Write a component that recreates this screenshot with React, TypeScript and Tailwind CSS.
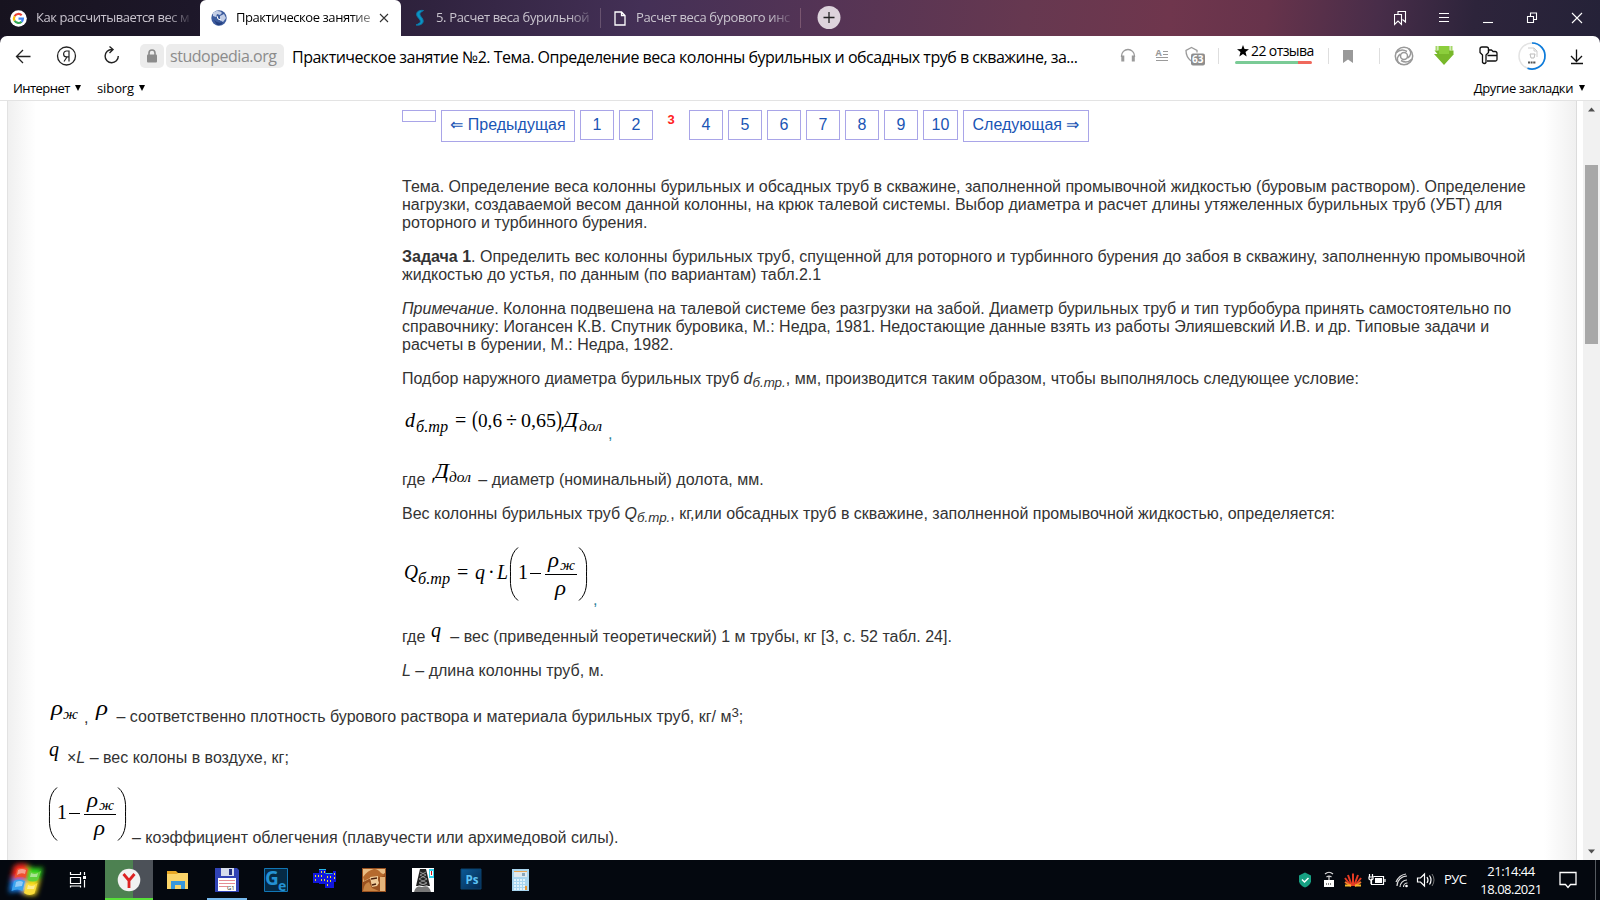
import React from "react";

type Kids = { children?: React.ReactNode; className?: string };

const Line = ({ children, className = "" }: Kids) => (
  <div className={"h-[18px] whitespace-nowrap leading-[18px] " + className}>{children}</div>
);

const T = ({ x, y, s = 20, i = true, w, children }: { x: number; y: number; s?: number; i?: boolean; w?: number; children: string }) => (
  <text
    x={x}
    y={y}
    fontSize={s}
    fontStyle={i ? "italic" : "normal"}
    textLength={w}
    lengthAdjust="spacingAndGlyphs"
    fill="#000"
  >
    {children}
  </text>
);

const Formula = ({ w, h, children }: { w: number; h: number; children: React.ReactNode }) => (
  <svg width={w} height={h} viewBox={`0 0 ${w} ${h}`} className="shrink-0 overflow-visible font-['Liberation_Serif',serif]">
    {children}
  </svg>
);

/* Bracketed (1 - rho_zh / rho) factor */
const Factor = ({ x, y = 0 }: { x: number; y?: number }) => (
  <g transform={`translate(${x} ${y})`}>
    <path d="M8 .5C-1 8 .5 20 .5 27S-1 46 8 53.500" fill="none" stroke="#000" />
    <path d="M69 .5C78 8 76.500 20 76.500 27S78 46 69 53.500" fill="none" stroke="#000" />
    <T x={8} y={32} i={false}>1</T>
    <path d="M20 26.500h11M35 27.500h32" stroke="#000" />
    <T x={38} y={20} w={11}>ρ</T>
    <T x={50} y={23} s={15} w={15}>ж</T>
    <T x={45} y={48} w={11}>ρ</T>
  </g>
);

const Page = ({ children, className = "h-[30px] w-[34px]" }: Kids) => (
  <div className={"flex justify-center border border-[#a9a5e8] pt-[5px] leading-[18px] text-[#1a55b5] " + className}>
    {children}
  </div>
);

const Sep = ({ className = "" }: Kids) => <div className={"h-4 w-px bg-[#dedede] " + className} />;

function Tabs() {
  return (
    <div className="flex h-9 items-center bg-[linear-gradient(97deg,#17131f_0%,#1d1729_12%,#30233f_27%,#443056_40%,#553455_52%,#663850_64%,#6f364d_73%,#67334b_79%,#482d49_86%,#2d243b_92%,#252238_100%)] text-[13px] text-[#c9c4ce]">
      <div className="flex h-9 w-[200px] items-center pl-[10px]">
        <svg width="17" height="17" viewBox="0 0 17 17" className="shrink-0">
          <circle cx="8.500" cy="8.500" r="8.300" fill="#fff" />
          <g fill="none" strokeWidth="2.200">
            <path d="M4.600 6.200A4.500 4.500 0 0 1 11.700 5.300" stroke="#ea4335" />
            <path d="M4.600 6.200a4.500 4.500 0 0 0 0 4.600" stroke="#fbbc05" />
            <path d="M4.600 10.800a4.500 4.500 0 0 0 7 .9" stroke="#34a853" />
            <path d="M8.500 8.700h4.400a4.500 4.500 0 0 1-1.300 3" stroke="#4285f4" />
          </g>
        </svg>
        <span className="ml-[9px] w-[158px] whitespace-nowrap tracking-[-0.45px] [mask-image:linear-gradient(90deg,#000_82%,transparent)]">Как рассчитывается вес м</span>
      </div>
      <div className="flex h-9 w-[201px] items-center rounded-t-[6px] bg-white pl-[11px] text-black">
        <svg width="16" height="16" viewBox="0 0 16 16" className="shrink-0">
          <circle cx="8" cy="8" r="7.700" fill="#3d5c9e" />
          <path d="M2 3c3-3 8-2 9 0L9 5 6 4 5 7 2 6ZM9 6l4-2 2 4-3 4-3-2Z" fill="#c3cee6" />
          <path d="M3 10q4 4 9 2-2 4-6 3Z" fill="#243f7e" />
          <path d="M6 6l1 3 3 1" stroke="#fff" fill="none" />
        </svg>
        <span className="ml-[9px] w-[136px] whitespace-nowrap tracking-[-0.45px] [mask-image:linear-gradient(90deg,#000_84%,transparent_110%)]">Практическое занятие</span>
        <svg width="10" height="10" viewBox="0 0 10 10" className="ml-[7px]">
          <path d="M1 1l8 8M9 1L1 9" stroke="#333" strokeWidth="1.100" />
        </svg>
      </div>
      <div className="flex h-9 w-[199px] items-center pl-[13px]">
        <svg width="11" height="18" viewBox="0 0 11 18" className="shrink-0">
          <path d="M9.500 1.500C3 .5 1 5 4 8.500s4 5-2 7.500c6 1 9-3 6-7S5 4 9.500 1.500Z" fill="#0c94c4" stroke="#0b78a8" />
        </svg>
        <span className="ml-[11px] w-[155px] whitespace-nowrap tracking-[-0.35px] [mask-image:linear-gradient(90deg,#000_85%,transparent_105%)]">5. Расчет веса бурильной</span>
      </div>
      <div className="h-5 w-px bg-[#67526f]" />
      <div className="flex h-9 w-[199px] items-center pl-[13px]">
        <svg width="12" height="15" viewBox="0 0 12 15" className="shrink-0">
          <path d="M1 1h6.500L11 4.500V14H1ZM7.500 1v3.500H11" fill="none" stroke="#fff" strokeWidth="1.300" />
        </svg>
        <span className="ml-[10px] w-[158px] whitespace-nowrap tracking-[-0.35px] [mask-image:linear-gradient(90deg,#000_85%,transparent)]">Расчет веса бурового инс</span>
      </div>
      <div className="h-5 w-px bg-[#7a5670]" />
      <svg width="24" height="24" viewBox="0 0 24 24" className="ml-4">
        <circle cx="12" cy="11.500" r="11.500" fill="#ddd3dc" />
        <path d="M6.500 11.500h11M12 6v11" stroke="#222" strokeWidth="1.300" />
      </svg>
      <svg width="206" height="36" viewBox="0 0 206 36" className="ml-auto" fill="none" stroke="#fff" strokeWidth="1.100">
        <path d="M.5 14.500h7v10l-3.500-3.500-3.500 3.500ZM4 14v-2.500h7.500V22l-3-2.500" />
        <path d="M45 13.500h10M45 17.500h10M45 21.500h10" />
        <path d="M89 22.500h10" />
        <path d="M133.500 16.500h6v6h-6ZM136.500 16v-3h6v6.500h-3" />
        <path d="M178 13l10 10M188 13l-10 10" />
      </svg>
    </div>
  );
}

function Toolbar() {
  return (
    <div className="bg-[#1d1729] bg-[linear-gradient(90deg,#1a1525_50%,#252238_50%)]">
      <div className="flex h-10 items-center rounded-t-[7px] bg-white">
        <svg width="140" height="40" viewBox="0 0 140 40" className="shrink-0" fill="none" stroke="#222" strokeWidth="1.300">
          <path d="M30.500 20.500H17M23 14l-6.500 6.500L23 27" />
          <circle cx="66.500" cy="20" r="9" />
          <path d="M69 14.500v11M69 15h-2.500a2.700 2.700 0 0 0 0 5.800h2.500M67 21l-3 4.500" strokeWidth="1.200" />
          <path d="M112 13.500A6.600 6.600 0 1 0 118.300 20M109.500 10.500l3.500 3-3.500 3.500" strokeWidth="1.400" />
        </svg>
        <div className="flex h-6 w-6 items-center justify-center rounded-[5px] bg-[#ececec]">
          <svg width="12" height="14" viewBox="0 0 12 14">
            <rect x="1" y="5.500" width="10" height="8" rx="1" fill="#8b8b8b" />
            <path d="M3 6V4a3 3 0 0 1 6 0v2" fill="none" stroke="#8b8b8b" strokeWidth="1.600" />
          </svg>
        </div>
        <div className="ml-[2px] flex h-6 w-[118px] items-center rounded-[5px] bg-[#ececec] pl-1 text-[16px] tracking-[-0.47px] text-[#8b8b8b]">studopedia.org</div>
        <div className="ml-2 w-[790px] whitespace-nowrap pt-px text-[16px] tracking-[-0.49px] text-black">Практическое занятие №2. Тема. Определение веса колонны бурильных и обсадных труб в скважине, за...</div>
        <svg width="100" height="40" viewBox="1118 0 100 40" className="ml-[36px] shrink-0 font-['Open_Sans',sans-serif]" fill="none" stroke="#9a9a9a" strokeWidth="1.300">
          <path d="M1121.500 21v-1a6.500 6.500 0 0 1 13 0v1" />
          <path d="M1122.800 19.500v6M1133.300 19.500v6" strokeWidth="3" />
          <text x="1155.500" y="20" fontSize="9" fontWeight="700" fill="#9a9a9a" stroke="none">A</text>
          <path d="M1163 15.500h5M1163 18.500h5M1156 21.500h12M1156 24.500h12" strokeWidth="1.200" />
          <path d="M1191 25q-5-4-5-10.500l5.500-3 5.500 3v2" />
          <rect x="1191" y="17.500" width="14" height="12" rx="2" fill="#8e8e8e" stroke="none" />
          <text x="1192" y="27" fontSize="10" fontWeight="700" fill="#fff" stroke="none">63</text>
        </svg>
        <Sep />
        <div className="mb-2 ml-4 w-[77px]">
          <div className="flex h-[21px] items-center whitespace-nowrap pl-[2px] text-[14px] tracking-[-0.6px] text-black">
            <svg width="12" height="12" viewBox="0 0 12 12" className="mr-[2px] shrink-0">
              <path d="M6 0l1.500 4.100L12 4.300 8.500 7.100 9.700 11.500 6 9 2.300 11.500 3.500 7.100 0 4.300l4.500-.2Z" />
            </svg>
            22 отзыва
          </div>
          <div className="flex h-[3px] overflow-hidden rounded-full">
            <div className="w-[63px] bg-[#7acb96]" />
            <div className="grow bg-[#f0685c]" />
          </div>
        </div>
        <Sep className="ml-4" />
        <svg width="10" height="13" viewBox="0 0 10 13" className="ml-[14px]"><path d="M0 0h10v13L5 9.500 0 13Z" fill="#999" /></svg>
        <Sep className="ml-[26px]" />
        <svg width="220" height="40" viewBox="1380 0 220 40" className="shrink-0" fill="none">
          <g stroke="#999" strokeWidth="1.500">
            <circle cx="1404" cy="20" r="8.700" />
            <circle cx="1404" cy="20" r="3.500" />
            <path d="M1396 17q5-5 11-1.500M1409 12.500q4 6-1.500 9.500M1412 23q-5 5-11 1.500M1399 27.500q-4-6 1.500-9.500" />
          </g>
          <path d="M1434.500 14.500l4 0V10h11v4.500h4l0 3.500h-3l3.500 0-10 11-10-11h3.500Z" fill="#78b82a" />
          <path d="M1435.500 10h2v5h-2ZM1450.500 10h2v5h-2Z" fill="#a6d86a" />
          <path d="M1439 10h10v8h-10Z" fill="#8cce3c" />
          <g stroke="#111" strokeWidth="1.300" strokeLinejoin="round">
            <path d="M1480 13q0-2 2-2h4.500q2 0 2 2v3.500l-2.500 2.500v7.500q-1.500 2-3.500 0v-7.500l-2.500-2.500Z" />
            <path d="M1488.500 15.500v-1.500h3l1.500 1.500h2q2 0 2 2v6q0 1.500-1.500 1.500h-8.500M1487.500 19.500h9.500" />
          </g>
          <circle cx="1532" cy="20" r="13" stroke="#e3e3e3" strokeWidth="1.500" />
          <path d="M1532 7a13 13 0 1 1-4.500 25.200" stroke="#0b7bdc" strokeWidth="1.700" />
          <path d="M1528 12h6l3 3v6M1534 12v3h3" stroke="#ccc" />
          <path d="M1530 18h5l-1 4h-3Z" stroke="#bbb" />
          <path d="M1528 26.500h8" stroke="#555" strokeWidth="2" strokeDasharray="2 .6" />
          <path d="M1576.500 13.500v12M1571 20l5.500 5.500L1582 20M1571 27.500h12" stroke="#111" strokeWidth="1.300" />
        </svg>
      </div>
    </div>
  );
}

const Caret = ({ className = "" }: Kids) => (
  <svg width="6" height="6" viewBox="0 0 6 6" className={className}><path d="M0 0h6L3 6Z" /></svg>
);

function Content() {
  return (
    <div className="flex h-[760px] border-t border-[#e3e3e3] bg-white">
      <div className="w-2 border-r border-[#e2e2e2]" />
      <div className="flex h-full w-[1568px] flex-col bg-[linear-gradient(90deg,#f0f0f0_0,#fff_28px,#fff_1536px,#f0f0f0_100%)] pl-[394px] pt-[9px] font-['Liberation_Sans',Arial,sans-serif] text-[16px] text-[#333]">
        <div className="flex h-[68px] items-start gap-[5px]">
          <div className="h-3 w-[34px] border border-[#a9a5e8]" />
          <Page className="h-8 w-[134px]">⇐ Предыдущая</Page>
          <Page>1</Page>
          <Page>2</Page>
          <div className="w-[26px] pt-[2px] text-center text-[13px] font-bold leading-[16px] text-[#f22]">3</div>
          {[4, 5, 6, 7, 8, 9, 10].map((n) => <Page key={n} className={n === 10 ? "h-[30px] w-[35px]" : "h-[30px] w-[34px]"}>{n}</Page>)}
          <Page className="h-8 w-[126px]">Следующая ⇒</Page>
        </div>
        <Line>Тема. Определение веса колонны бурильных и обсадных труб в скважине, заполненной промывочной жидкостью (буровым раствором). Определение</Line>
        <Line>нагрузки, создаваемой весом данной колонны, на крюк талевой системы. Выбор диаметра и расчет длины утяжеленных бурильных труб (УБТ) для</Line>
        <Line>роторного и турбинного бурения.</Line>
        <Line className="mt-4"><b>Задача 1</b>. Определить вес колонны бурильных труб, спущенной для роторного и турбинного бурения до забоя в скважину, заполненную промывочной</Line>
        <Line>жидкостью до устья, по данным (по вариантам) табл.2.1</Line>
        <Line className="mt-4"><i>Примечание</i>. Колонна подвешена на талевой системе без разгрузки на забой. Диаметр бурильных труб и тип турбобура принять самостоятельно по</Line>
        <Line>справочнику: Иогансен К.В. Спутник буровика, М.: Недра, 1981. Недостающие данные взять из работы Элияшевский И.В. и др. Типовые задачи и</Line>
        <Line>расчеты в бурении, М.: Недра, 1982.</Line>
        <Line className="mt-4">Подбор наружного диаметра бурильных труб <i>d<sub className="text-[13.33px]">б.тр.</sub></i>, мм, производится таким образом, чтобы выполнялось следующее условие:</Line>
        <div className="mt-[18px] flex h-[37px] items-end">
          <Formula w={204} h={37}>
            <T x={3} y={21}>d</T>
            <T x={14} y={26} s={16} w={32}>б.тр</T>
            <T x={53} y={21} i={false}>=</T>
            <T x={70} y={21} s={23} i={false} w={6}>(</T>
            <T x={76} y={21} s={19} i={false} w={24}>0,6</T>
            <T x={104} y={21} i={false}>÷</T>
            <T x={119} y={21} s={19} i={false} w={35}>0,65</T>
            <T x={154} y={21} s={23} i={false} w={6}>)</T>
            <T x={161} y={21} w={15}>Д</T>
            <T x={177} y={25} s={15} w={23}>дол</T>
          </Formula>
          <span className="ml-[2px] leading-[18px] text-[#2b7f9b]">,</span>
        </div>
        <div className="mt-[18px] flex h-[28px] items-end whitespace-nowrap leading-[18px]">
          где
          <Formula w={53} h={28}>
            <T x={9} y={17} w={15}>Д</T>
            <T x={24} y={21} s={15} w={22}>дол</T>
          </Formula>
          – диаметр (номинальный) долота, мм.
        </div>
        <Line className="mt-4">Вес колонны бурильных труб <i>Q<sub className="text-[13.33px]">б.тр.</sub></i>, кг,или обсадных труб в скважине, заполненной промывочной жидкостью, определяется:</Line>
        <div className="mt-[24px] flex h-[62px] items-end">
          <Formula w={190} h={62}>
            <T x={2} y={32} w={14}>Q</T>
            <T x={16} y={37} s={16} w={32}>б.тр</T>
            <T x={55} y={32} i={false}>=</T>
            <T x={73} y={32}>q</T>
            <T x={86} y={32} i={false}>·</T>
            <T x={95} y={32} w={11}>L</T>
            <Factor x={108} />
          </Formula>
          <span className="ml-px leading-[18px] text-[#2b7f9b]">,</span>
        </div>
        <div className="mt-[14px] flex h-[23px] items-end whitespace-nowrap leading-[18px]">
          где
          <Formula w={25} h={23}><T x={6} y={14}>q</T></Formula>
          – вес (приведенный теоретический) 1 м трубы, кг [3, с. 52 табл. 24].
        </div>
        <Line className="mt-4"><i>L</i> – длина колонны труб, м.</Line>
        <div className="-ml-[353px] mt-[19px] flex h-[28px] items-end whitespace-nowrap leading-[18px]">
          <Formula w={35} h={28}>
            <T x={2} y={16} w={12}>ρ</T>
            <T x={14} y={20} s={15} w={15}>ж</T>
          </Formula>
          ,
          <Formula w={28} h={28}><T x={8} y={16} w={12}>ρ</T></Formula>
          <span>– соответственно плотность бурового раствора и материала бурильных труб, кг/ м<span className="relative -top-[5px] text-[13.33px]">3</span>;</span>
        </div>
        <div className="-ml-[353px] mt-[12px] flex h-[28px] items-end whitespace-nowrap leading-[18px]">
          <Formula w={18} h={28}><T x={0} y={17}>q</T></Formula>
          <span>×<i>L</i> – вес колоны в воздухе, кг;</span>
        </div>
        <div className="-ml-[353px] mt-[18px] flex h-[62px] items-end whitespace-nowrap leading-[18px]">
          <Formula w={83} h={62}><Factor x={0} y={2} /></Formula>
          – коэффициент облегчения (плавучести или архимедовой силы).
        </div>
      </div>
      <div className="w-[7px] border-l border-[#dcdcdc]" />
      <div className="flex w-[17px] flex-col items-center bg-[#f1f1f1]">
        <svg width="17" height="17"><path d="M5 10.500h7L8.500 6.500Z" fill="#505050" /></svg>
        <div className="mt-[47px] h-[179px] w-[13px] bg-[#a8a8a8]" />
        <svg width="17" height="17" className="mt-auto"><path d="M5 6.500h7L8.500 10.500Z" fill="#505050" /></svg>
      </div>
    </div>
  );
}

function Taskbar() {
  return (
    <div className="flex h-10 items-center bg-[#04080f] text-white">
      <svg width="540" height="40" viewBox="0 0 540 40" className="shrink-0 font-['Open_Sans',sans-serif]">
        <defs>
          <filter id="glow" x="-30%" y="-30%" width="160%" height="160%"><feGaussianBlur stdDeviation="2.500" /></filter>
          <linearGradient id="ps" x2="1" y2="1"><stop stopColor="#0b5b97" /><stop offset="1" stopColor="#06294f" /></linearGradient>
          <g id="flag">
            <path d="M17 9q5-2.500 11 0l-2.500 9q-5-2.500-11 0Z" fill="#f0502e" />
            <path d="M30 11q5 3 11 0l-3 9q-5 3-10.500 0Z" fill="#5fd03a" />
            <path d="M14 21q5-3 11 0l-2.500 10q-5-3-11 0Z" fill="#3ba3ee" />
            <path d="M26.500 23q5 3 11 0L34.500 33.500q-5 3-10.500-.5Z" fill="#f9dc3a" />
          </g>
        </defs>
        <g filter="url(#glow)">
          <path d="M14 6q7-4 14-1l-2 14-15-1Z" fill="#ff2a1c" />
          <path d="M28 6q9 4 15 1l-3 13-13-1Z" fill="#35e01f" />
          <path d="M11 19h14l-2 14q-6-4-14 0Z" fill="#1c8cff" />
          <path d="M25 20h15l-4 15q-8 1-13-1Z" fill="#ffe01c" />
        </g>
        <use href="#flag" />
        <path d="M18 10q4-2 8 0l-1 4q-4-2-8 1ZM16 22q4-2 7 0l-1 4-7 1ZM31 13q4 2 7 0l-1 4-7 0ZM28 25q4 2 7 0l-1 4-7 0Z" fill="#fff" opacity=".45" />
        <g fill="none" stroke="#fff" strokeWidth="1.200">
          <path d="M70.500 12v2.500h10V12M70.500 17.500h10v6h-10ZM70.500 27.500v-1.500h10v1.500M84.500 12v3M84.500 20v7.500" />
        </g>
        <path d="M83 16h3v3h-3Z" fill="#fff" />
        <path d="M105 0h28v38h-28Z" fill="#4d8151" />
        <path d="M133 0h20v38h-20Z" fill="#4c5158" />
        <path d="M105 38h48v2h-48Z" fill="#57e038" />
        <circle cx="129" cy="20" r="11.300" fill="#f1f1f1" />
        <path d="M123.500 14l5.500 6.500 5.500-6.500M129 20v8" fill="none" stroke="#dd2222" strokeWidth="2.800" />
        <path d="M167 11h9l2 2h10v3h-21Z" fill="#e9a825" />
        <path d="M167 14h10l1-1h10v16h-21Z" fill="#fbd469" />
        <path d="M171 29v-8h14v8h-4v-4h-6v4Z" fill="#3997dc" />
        <path d="M215 8h22l2 2v22h-24Z" fill="#3143b5" />
        <path d="M221 8h13v8h-13Z" fill="#d6dded" /><path d="M229 9h3v6h-3Z" fill="#233082" />
        <path d="M218 18h18v13h-18Z" fill="#fff" />
        <path d="M219 20.500h16M219 23.500h16M219 26.500h9" stroke="#e58c94" />
        <text x="227" y="30" fontSize="6" fill="#333">G1</text>
        <path d="M207 38h40v2h-40Z" fill="#76b9ed" />
        <path d="M264.500 8.500h23v23h-23Z" fill="#052a45" stroke="#1176b5" />
        <text x="265" y="24.500" fontSize="19" fontWeight="700" fill="#2492d4">G</text>
        <text x="278" y="30.500" fontSize="14" fontWeight="700" fill="#2492d4">e</text>
        <path d="M313 13h6V9h7v4h7v-2h3v11h-2v6h-9v-4h-6v-1h-6Z" fill="#1117dc" />
        <path d="M319 9.500h7M325.500 13.500h7" stroke="#25b5e8" />
        <path d="M315 16h1M318 16h1M315 20h1M321 12h1M324 12h1M321 16h1M321 20h1M324 20h1M327 17h1M330 17h1M327 21h1M330 21h1M327 25h1M334 14h1M334 18h1" stroke="#e8e12c" strokeWidth="2" />
        <path d="M362 8h24v24h-24Z" fill="#9a5220" />
        <path d="M363 9h22v4l-6 4-10 2-6 3Z" fill="#e9bd84" />
        <path d="M363 17q5-7 11-8 4 0 7 4l4 2-4 2-9 0-8 4Z" fill="#b56a2e" />
        <path d="M370 17l8-1v4l1 3-2 3-5 1Z" fill="#f0cc9a" />
        <path d="M371 19l6-1M372 25l4-1" stroke="#48200c" strokeWidth="1.500" />
        <path d="M363 31q1-8 6-9l3 6 7 3Z" fill="#c98544" /><path d="M380 17h5v14h-5Z" fill="#e4b47a" />
        <path d="M412 8h22v24h-22Z" fill="#fff" />
        <path d="M420 9h6l4 17h-14Z" fill="#222" />
        <path d="M420 12l6 3-7 4 8 4-9 3M426 12l-6 3 7 4-8 4 9 3" fill="none" stroke="#aaa" strokeWidth=".8" />
        <path d="M414 32q2-7 8-5 7-3 9 5Z" fill="#777" /><path d="M429 9h5v9h-5Z" fill="#35d4ee" />
        <path d="M430 11h3v5h-3Z" fill="#fff" /><path d="M431 11h1v4h-1Z" fill="#c11" />
        <path d="M461 9h20v20h-20Z" fill="url(#ps)" stroke="#0a426f" />
        <text x="465.500" y="24" fontSize="11.500" fontWeight="700" fill="#5cc2f5">Ps</text>
        <path d="M512 9h17v22h-17Z" fill="#a9d5ef" />
        <path d="M514 11h13v6h-13Z" fill="#dfe9ee" /><path d="M514 11.500h13" stroke="#e7a553" />
        <path d="M522 13h3v3h-3Z" fill="#8aa6bb" />
        <path d="M514 20h11M514 23h11M514 26h11M514 29h11" stroke="#f4fbff" strokeWidth="1.500" strokeDasharray="2 1" />
        <path d="M525 26h2v4h-2Z" fill="#e79a3c" />
      </svg>
      <svg width="144" height="40" viewBox="1293 0 144 40" className="ml-[753px] shrink-0" fill="none">
        <path d="M1305 12.500l6 3v6q-1 4-6 6-5-2-6-6v-6Z" fill="#16a082" />
        <path d="M1302 19.500l2.500 2.500 4-4" stroke="#fff" strokeWidth="1.500" />
        <path d="M1324 20h10v7h-10Z" fill="#fff" /><path d="M1326 24h6" stroke="#111" strokeDasharray="1 1" />
        <path d="M1329 20v-4M1325 14q4-3.500 8 0M1326.500 17q2.500-2 5 0" stroke="#ddd" strokeWidth="1.200" />
        <path d="M1353 26V13.500M1352 26l-4-11M1354 26l4-11M1351 26l-6-8M1355 26l6-8" stroke="#e63b23" strokeWidth="2" />
        <path d="M1351 26l-6-4M1355 26l6-4" stroke="#f4792a" strokeWidth="2" /><path d="M1345 25.500h6M1355 25.500h6" stroke="#f6b52c" strokeWidth="2" />
        <path d="M1373.500 16.500h10v8h-12v-6M1385 19v3M1369.500 14v3M1372.500 14v3M1369 17h4v2l-2 1.500-2-1.500ZM1371 20v4" stroke="#fff" strokeWidth="1.200" />
        <path d="M1375 18h7v5h-7Z" fill="#fff" />
        <path d="M1397 26a10 10 0 0 1 10-10M1400 27a7 7 0 0 1 7-7M1403.500 27a4 4 0 0 1 4-4M1396 22q3-7 10-8" stroke="#ddd" strokeWidth="1.200" />
        <circle cx="1406.500" cy="26" r="1.300" fill="#fff" />
        <path d="M1417.500 18h3l4-4v12l-4-4h-3ZM1427 17q2 3 0 6M1429.500 15.500q3 4.500 0 9" stroke="#fff" strokeWidth="1.200" />
        <path d="M1432 14q4 6 0 12" stroke="#777" />
      </svg>
      <div className="ml-[7px] w-[23px] text-[13px] tracking-[-0.5px]">РУС</div>
      <div className="ml-[12px] w-[64px] whitespace-nowrap text-center text-[13px] leading-[18px] tracking-[-0.5px]">21:14:44<br />18.08.2021</div>
      <svg width="18" height="18" viewBox="0 0 18 18" className="ml-[16px] shrink-0" fill="none" stroke="#fff" strokeWidth="1.300">
        <path d="M1 1.500h16v12h-5.500L9 16.500l-2.500-3H1Z" />
      </svg>
      <div className="ml-auto mr-1 h-10 w-px bg-[#555a60]" />
    </div>
  );
}

export default function App() {
  return (
    <div className="h-[900px] w-[1600px] overflow-hidden bg-white font-['Open_Sans','Noto_Sans',sans-serif]">
      <Tabs />
      <Toolbar />
      <div className="flex h-6 items-center bg-white pl-[13px] text-[13px] text-black">
        <span className="w-[57px] pt-px tracking-[-0.55px]">Интернет</span>
        <Caret className="ml-[5px]" />
        <span className="ml-4 w-[35px] pt-px tracking-[-0.1px]">siborg</span>
        <Caret className="ml-[7px]" />
        <span className="ml-auto whitespace-nowrap pt-px tracking-[-0.4px]">Другие закладки</span>
        <Caret className="ml-[6px] mr-[15px]" />
      </div>
      <Content />
      <Taskbar />
    </div>
  );
}
